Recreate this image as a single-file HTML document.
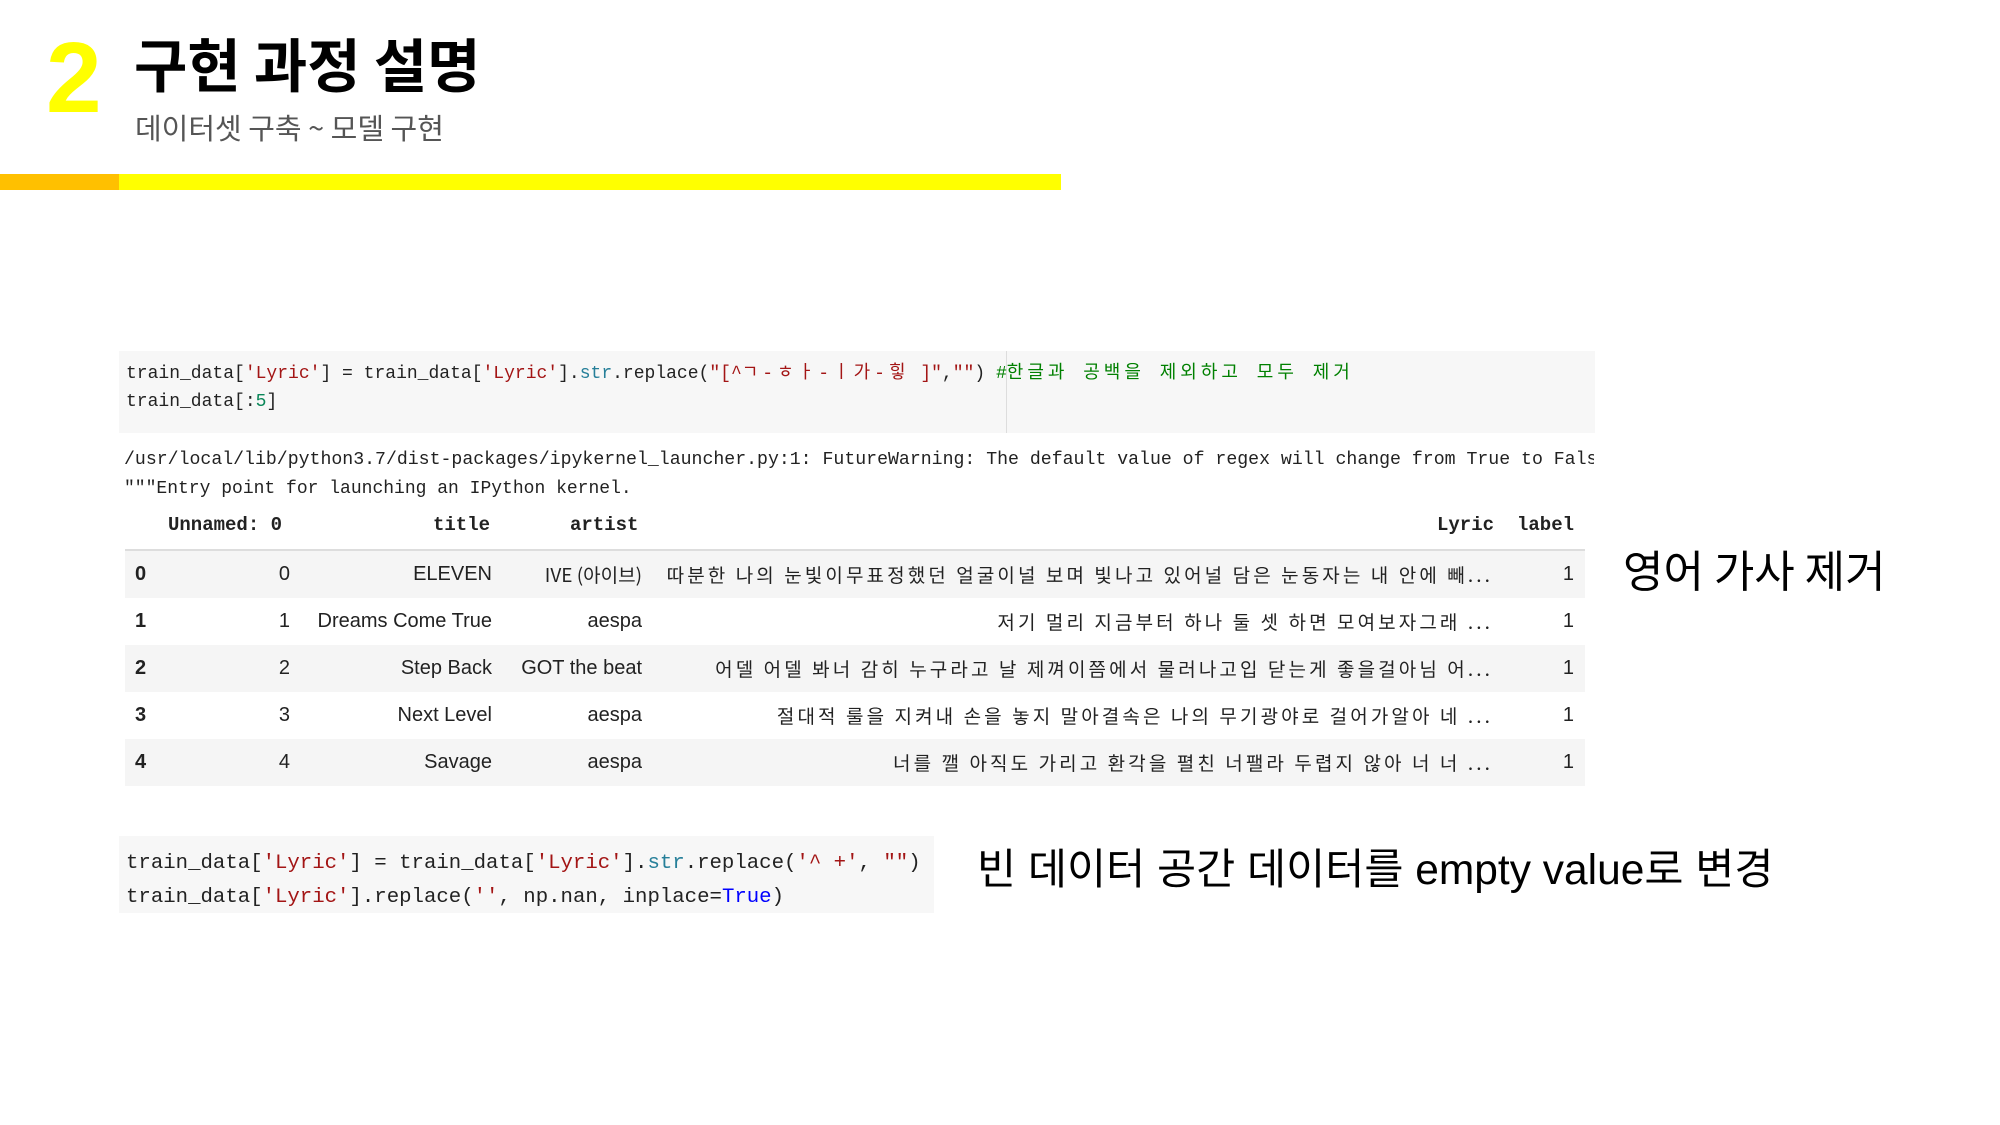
<!DOCTYPE html>
<html><head><meta charset="utf-8"><style>
body{margin:0;width:2000px;height:1125px;background:#fff;position:relative;overflow:hidden;font-family:"Liberation Sans","Noto Sans CJK KR",sans-serif}
.a{position:absolute;white-space:nowrap}
.mono{font-family:"Liberation Mono","Noto Sans CJK KR",monospace;color:#222}
.r{color:#a31515}.b{color:#267f99}.g{color:#008000}.n{color:#098658}.t{color:#0000ff}
.k{letter-spacing:4px}
.row{position:absolute;left:125px;width:1460px;height:47px}
.c{position:absolute;top:0;line-height:47px;font-size:20px;color:#222;white-space:nowrap}
.ck{font-family:"Noto Sans CJK KR",sans-serif;font-size:19px;letter-spacing:3.1px}
</style></head><body>
<div class="a" style="left:46px;top:18px;font-size:100px;font-weight:bold;color:#ffff00;line-height:120px">2</div>
<div class="a" style="left:134px;top:22px;font-size:58px;font-weight:bold;color:#000;line-height:80px;font-family:'Noto Sans CJK KR',sans-serif">구현 과정 설명</div>
<div class="a" style="left:135px;top:107px;font-size:29px;color:#555;line-height:40px;font-family:'Noto Sans CJK KR',sans-serif">데이터셋 구축 ~ 모델 구현</div>
<div class="a" style="left:0;top:174px;width:119px;height:16px;background:#ffc000"></div>
<div class="a" style="left:119px;top:174px;width:942px;height:16px;background:#ffff00"></div>

<div class="a" style="left:119px;top:351px;width:1476px;height:82px;background:#f7f7f7"></div>
<div class="a" style="left:1006px;top:351px;width:1px;height:82px;background:#ddd"></div>
<div class="a mono" style="left:126px;top:362px;font-size:18px;line-height:24px">train_data[<span class="r">'Lyric'</span>] = train_data[<span class="r">'Lyric'</span>].<span class="b">str</span>.replace(<span class="r">"[^<span class="k">ㄱ-ㅎㅏ-ㅣ가-힣</span> ]"</span>,<span class="r">""</span>) <span class="g">#<span class="k">한글과 공백을 제외하고 모두 제거</span></span></div>
<div class="a mono" style="left:126px;top:390px;font-size:18px;line-height:24px">train_data[:<span class="n">5</span>]</div>
<div class="a mono" style="left:124px;top:448px;font-size:18.2px;line-height:24px;width:1470px;overflow:hidden">/usr/local/lib/python3.7/dist-packages/ipykernel_launcher.py:1: FutureWarning: The default value of regex will change from True to False</div>
<div class="a mono" style="left:124px;top:477px;font-size:18px;line-height:24px">  """Entry point for launching an IPython kernel.</div>

<div class="a mono" style="left:168px;top:513px;font-size:19px;font-weight:bold;line-height:24px">Unnamed: 0</div>
<div class="a mono" style="left:433px;top:513px;font-size:19px;font-weight:bold;line-height:24px">title</div>
<div class="a mono" style="left:570px;top:513px;font-size:19px;font-weight:bold;line-height:24px">artist</div>
<div class="a mono" style="left:1437px;top:513px;font-size:19px;font-weight:bold;line-height:24px">Lyric</div>
<div class="a mono" style="left:1517px;top:513px;font-size:19px;font-weight:bold;line-height:24px">label</div>
<div class="a" style="left:125px;top:549px;width:1460px;height:2px;background:#ddd"></div>

<div class="row" style="top:551px;background:#f5f5f5">
<div class="c" style="left:10px;font-weight:bold">0</div><div class="c" style="right:1295px">0</div><div class="c" style="right:1093px">ELEVEN</div><div class="c ck" style="right:943px;letter-spacing:0">IVE (아이브)</div><div class="c ck" style="right:92px">따분한 나의 눈빛이무표정했던 얼굴이널 보며 빛나고 있어널 담은 눈동자는 내 안에 빼...</div><div class="c" style="right:11px">1</div></div>
<div class="row" style="top:598px">
<div class="c" style="left:10px;font-weight:bold">1</div><div class="c" style="right:1295px">1</div><div class="c" style="right:1093px">Dreams Come True</div><div class="c" style="right:943px">aespa</div><div class="c ck" style="right:92px">저기 멀리 지금부터 하나 둘 셋 하면 모여보자그래 ...</div><div class="c" style="right:11px">1</div></div>
<div class="row" style="top:645px;background:#f5f5f5">
<div class="c" style="left:10px;font-weight:bold">2</div><div class="c" style="right:1295px">2</div><div class="c" style="right:1093px">Step Back</div><div class="c" style="right:943px">GOT the beat</div><div class="c ck" style="right:92px">어델 어델 봐너 감히 누구라고 날 제껴이쯤에서 물러나고입 닫는게 좋을걸아님 어...</div><div class="c" style="right:11px">1</div></div>
<div class="row" style="top:692px">
<div class="c" style="left:10px;font-weight:bold">3</div><div class="c" style="right:1295px">3</div><div class="c" style="right:1093px">Next Level</div><div class="c" style="right:943px">aespa</div><div class="c ck" style="right:92px">절대적 룰을 지켜내 손을 놓지 말아결속은 나의 무기광야로 걸어가알아 네 ...</div><div class="c" style="right:11px">1</div></div>
<div class="row" style="top:739px;background:#f5f5f5">
<div class="c" style="left:10px;font-weight:bold">4</div><div class="c" style="right:1295px">4</div><div class="c" style="right:1093px">Savage</div><div class="c" style="right:943px">aespa</div><div class="c ck" style="right:92px">너를 깰 아직도 가리고 환각을 펼친 너팰라 두렵지 않아 너 너 ...</div><div class="c" style="right:11px">1</div></div>

<div class="a" style="left:1623px;top:538px;font-size:44px;line-height:60px;color:#000;font-family:'Noto Sans CJK KR',sans-serif">영어 가사 제거</div>

<div class="a" style="left:119px;top:836px;width:815px;height:77px;background:#f7f7f7"></div>
<div class="a mono" style="left:126px;top:851px;font-size:20.7px;line-height:26px">train_data[<span class="r">'Lyric'</span>] = train_data[<span class="r">'Lyric'</span>].<span class="b">str</span>.replace(<span class="r">'^ +'</span>, <span class="r">""</span>)</div>
<div class="a mono" style="left:126px;top:885px;font-size:20.7px;line-height:26px">train_data[<span class="r">'Lyric'</span>].replace(<span class="r">''</span>, np.nan, inplace=<span class="t">True</span>)</div>
<div class="a" style="left:977px;top:841px;font-size:42.5px;line-height:60px;color:#000;font-family:'Liberation Sans','Noto Sans CJK KR',sans-serif">빈 데이터 공간 데이터를 empty value로 변경</div>
</body></html>
